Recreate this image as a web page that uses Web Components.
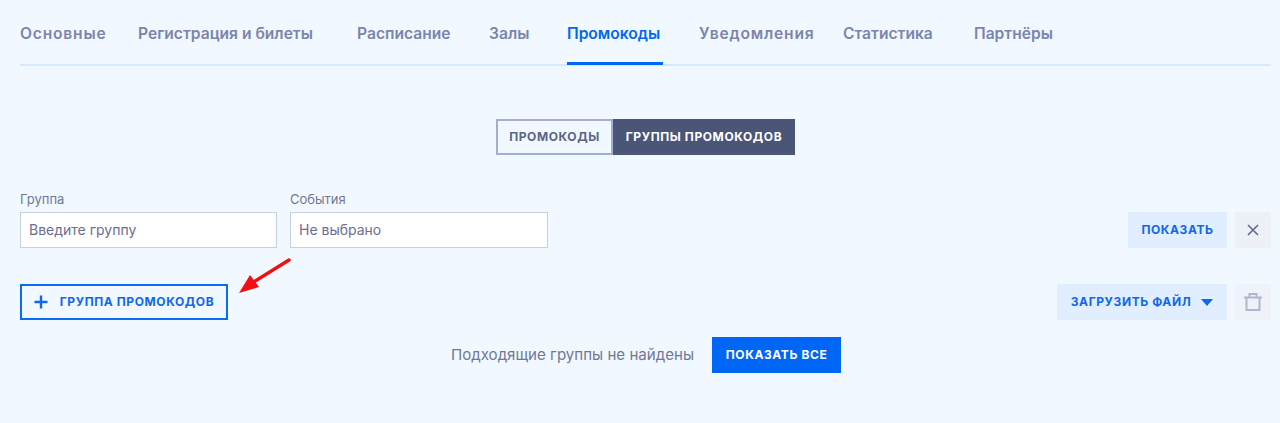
<!DOCTYPE html>
<html lang="ru">
<head>
<meta charset="utf-8">
<title>Промокоды</title>
<style>
  html, body { margin: 0; height: 100%; }
  body { background: #f2f8ff; font-family: Inter, "Noto Sans", sans-serif; overflow: hidden; }
</style>
</head>
<body>
<promo-page></promo-page>

<script>
// shared button look
const btnCss = `
  .btn {
    box-sizing: border-box; height: 36px; display: inline-flex; align-items: center; justify-content: center;
    font: 700 12px/1 Inter, sans-serif; letter-spacing: .6px; text-transform: uppercase; white-space: nowrap;
  }
`;

class PromoTabs extends HTMLElement {
  constructor(){
    super();
    this.attachShadow({ mode: 'open' });
    const active = this.getAttribute('active');
    const items = this.getAttribute('items').split('|');
    // each item is "label:width"
    this.shadowRoot.innerHTML = `
      <style>
        :host { display: flex; gap: 36px; height: 66px; box-sizing: border-box; border-bottom: 2px solid #d6e9fd; }
        a {
          display: block; height: 65px; box-sizing: border-box; padding-top: 25px;
          font: 600 15.6px/18px Inter, sans-serif; color: #7a84ad; white-space: nowrap;
        }
        a:nth-child(2) { letter-spacing: .8px; }
        a:nth-child(7) { letter-spacing: .8px; }
        a.on { color: #0066f5; border-bottom: 3px solid #0066f5; }
      </style>
      ${items.map(i => {
        const [t, w] = i.split(':');
        return `<a class="${t === active ? 'on' : ''}" style="width:${w}px">${t}</a>`;
      }).join('')}
    `;
  }
}

class PromoToggle extends HTMLElement {
  constructor(){
    super();
    this.attachShadow({ mode: 'open' });
    this.shadowRoot.innerHTML = `
      <style>
        ${btnCss}
        :host { display: flex; justify-content: center; margin-top: 53px; }
        .off { width: 117px; border: 2px solid #a3afd0; color: #5b6587; background: #f2f8ff; }
        .cur { width: 182px; background: #4a5578; color: #fff; }
      </style>
      <div class="btn off">Промокоды</div>
      <div class="btn cur">Группы промокодов</div>
    `;
  }
}

class PromoField extends HTMLElement {
  constructor(){
    super();
    this.attachShadow({ mode: 'open' });
    this.shadowRoot.innerHTML = `
      <style>
        :host { display: block; width: 257px; }
        label { display: block; font: 400 13px/16px Inter, sans-serif; color: #6f7896; margin-bottom: 5px; }
        .box {
          box-sizing: border-box; height: 36px; background: #fff; border: 1px solid #c6d0e4;
          padding: 0 8px; font: 400 14px/34px Inter, sans-serif; color: #69708f;
        }
      </style>
      <label>${this.getAttribute('label')}</label>
      <div class="box">${this.getAttribute('value')}</div>
    `;
  }
}

class PromoButton extends HTMLElement {
  constructor(){
    super();
    this.attachShadow({ mode: 'open' });
    this.shadowRoot.innerHTML = `
      <style>
        ${btnCss}
        :host { display: block; }
        .btn { width: 100%; }
        .soft { background: #e0eeff; color: #0f67ee; }
        .solid { background: #0066f5; color: #fff; }
        .line { border: 2px solid #0a6cf0; color: #0f67ee; }
        .grey { background: #eef0f7; }
        .grey.dim { background: #f0f2f9; }
        ::slotted(svg) { display: block; }
      </style>
      <div class="btn ${this.getAttribute('kind')}"><slot></slot></div>
    `;
  }
}

class PromoPage extends HTMLElement {
  constructor(){
    super();
    this.attachShadow({ mode: 'open' });
    this.shadowRoot.innerHTML = `
      <style>
        :host { display: block; position: relative; padding: 0 9px 0 20px; }
        .filters { display: flex; align-items: flex-end; margin-top: 36px; gap: 13px; }
        .spacer { flex: 1; }
        .acts { display: flex; gap: 8px; margin-left: -5px; }
        .row { display: flex; align-items: center; margin-top: 36px; }
        .none { display: flex; justify-content: center; align-items: center; gap: 18px; margin-top: 17px; padding-left: 1px; font: 400 15.1px/18px Inter, sans-serif; color: #6f7896; }
        .arrow { position: absolute; left: 236px; top: 254px; }
        svg { display: block; }
      </style>
      <promo-tabs active="Промокоды" items="Основные:82|Регистрация и билеты:183|Расписание:96|Залы:42|Промокоды:96|Уведомления:108|Статистика:95|Партнёры:81"></promo-tabs>
      <promo-toggle></promo-toggle>
      <div class="filters">
        <promo-field label="Группа" value="Введите группу"></promo-field>
        <promo-field label="События" value="Не выбрано" style="width:258px"></promo-field>
        <div class="spacer"></div>
        <div class="acts">
          <promo-button kind="soft" style="width:99px">Показать</promo-button>
          <promo-button kind="grey" style="width:36px">
            <svg width="12" height="12" viewBox="0 0 12 12"><path d="M1 1l10 10M11 1L1 11" stroke="#5f6a8c" stroke-width="1.6" fill="none"/></svg>
          </promo-button>
        </div>
      </div>
      <div class="row">
        <promo-button kind="line" style="width:208px">
          <svg width="14" height="14" viewBox="0 0 14 14" style="margin-right:12px"><path d="M7 .5v13M.5 7h13" stroke="#0f67ee" stroke-width="2.4" fill="none"/></svg>Группа промокодов
        </promo-button>
        <div class="spacer"></div>
        <div class="acts">
          <promo-button kind="soft" style="width:170px">Загрузить файл
            <svg width="12" height="7" viewBox="0 0 12 7" style="margin-left:10px"><path d="M0 0h12L6 7z" fill="#0f67ee"/></svg>
          </promo-button>
          <promo-button kind="grey dim" style="width:36px">
            <svg width="18" height="18" viewBox="0 0 18 18" fill="none" stroke="#aeb6d0" stroke-width="2"><path d="M0 4.5h18M5.5 4.5V1h7v3.5M2.5 4.5v12.5h13V4.5"/></svg>
          </promo-button>
        </div>
      </div>
      <div class="none">
        <span>Подходящие группы не найдены</span>
        <promo-button kind="solid" style="width:129px">Показать все</promo-button>
      </div>
      <svg class="arrow" width="60" height="44" viewBox="0 0 60 44">
        <path d="M53 6L16 29" stroke="#f00f14" stroke-width="3.4" stroke-linecap="round" fill="none"/>
        <path d="M3 39L14 21L23 33z" fill="#f00f14"/>
      </svg>
    `;
  }
}

customElements.define('promo-tabs', PromoTabs);
customElements.define('promo-toggle', PromoToggle);
customElements.define('promo-field', PromoField);
customElements.define('promo-button', PromoButton);
customElements.define('promo-page', PromoPage);
</script>
</body>
</html>
